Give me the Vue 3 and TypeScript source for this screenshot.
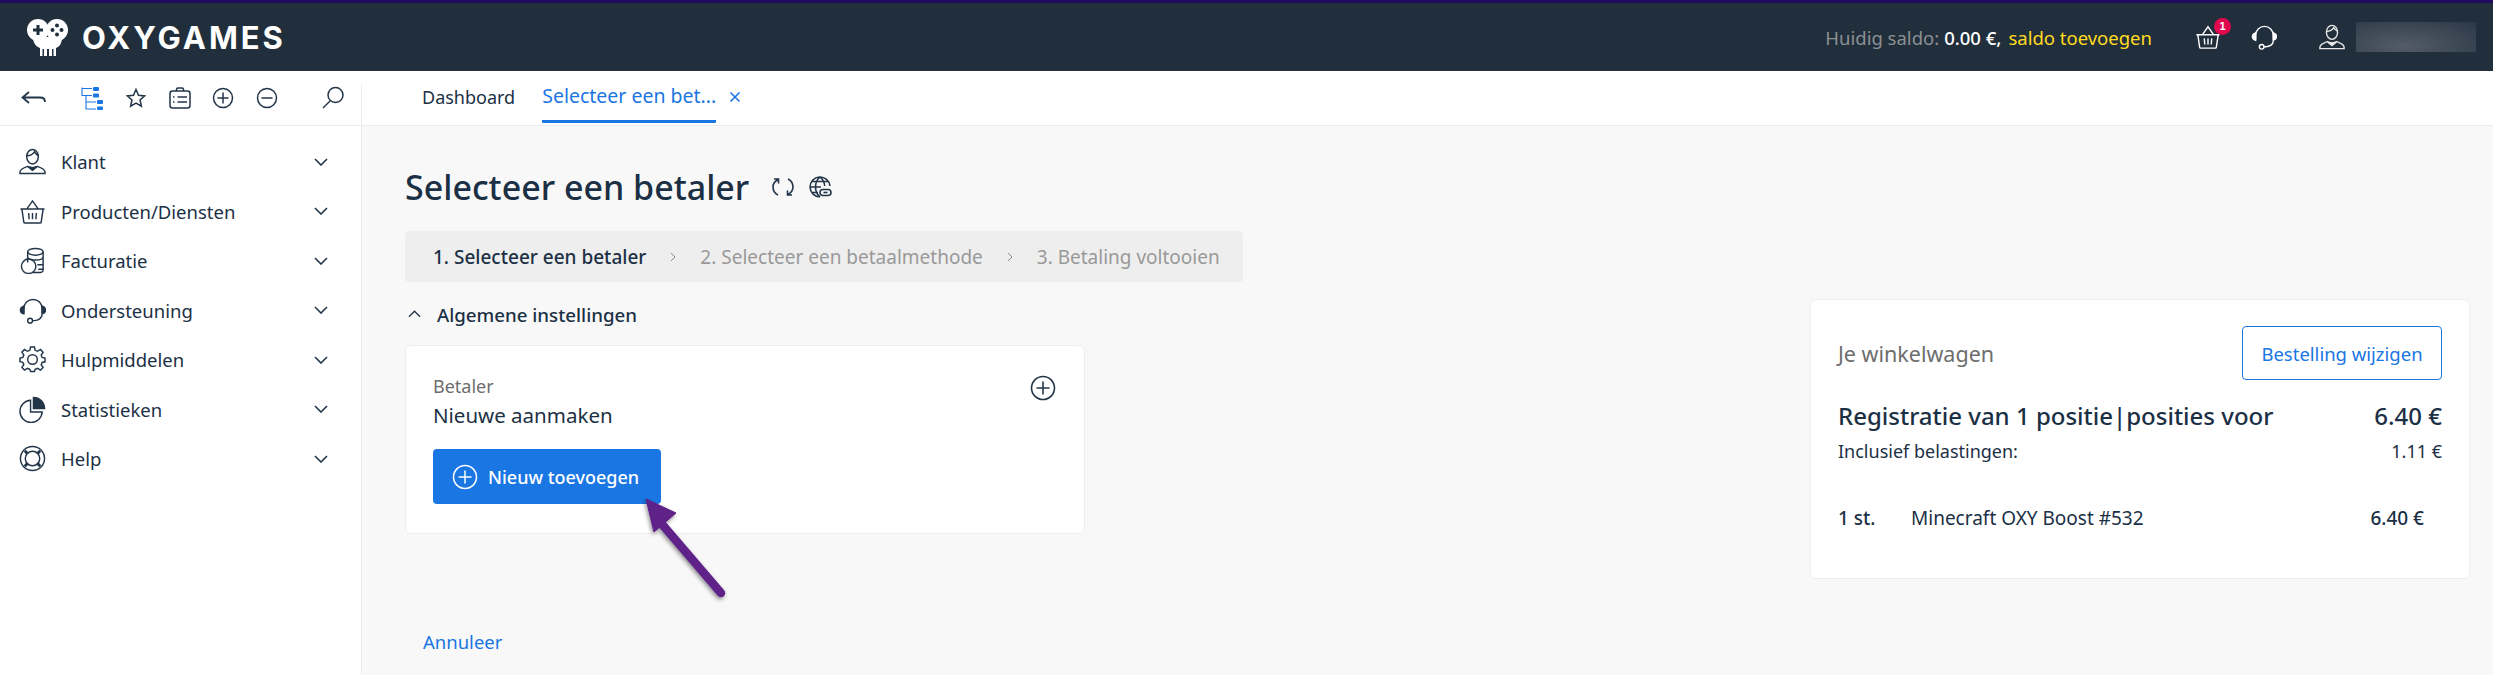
<template>
  <div class="page">
    <header class="topbar">
      <div class="logo">
        <svg class="logo-mark" viewBox="0 0 41 37">
          <circle cx="11" cy="11" r="11" fill="#fff" />
          <circle cx="30" cy="11" r="11" fill="#fff" />
          <path d="M6 18h29c0 7-3 10-6 11v8h-2.500v-7h-1.500v7h-3v-7h-2v7h-3v-7h-1.500v7H13v-8c-3-1-7-4-7-11z" fill="#fff" />
          <path d="M9.500 6h3v3.500H16v3h-3.500V16h-3v-3.500H6v-3h3.500z" fill="#212f3d" />
          <circle cx="30" cy="6.500" r="2" fill="#212f3d" />
          <circle cx="30" cy="15.500" r="2" fill="#212f3d" />
          <circle cx="25.500" cy="11" r="2" fill="#212f3d" />
          <circle cx="34.500" cy="11" r="2" fill="#212f3d" />
        </svg>
        <span class="logo-text">OXYGAMES</span>
      </div>
      <div class="top-right">
        <span class="balance">
          <span class="muted">Huidig saldo:</span>
          <b>0.00 €,</b>
          <span class="yellow">saldo toevoegen</span>
        </span>
        <span class="basket">
          <svg class="ico-top" viewBox="0 0 28 28" v-html="icons.basket"></svg>
          <i class="badge">1</i>
        </span>
        <svg class="ico-top headset" viewBox="0 0 28 28" v-html="icons.headset"></svg>
        <svg class="ico-top user" viewBox="0 0 28 28" v-html="icons.user"></svg>
        <div class="blurred"></div>
      </div>
    </header>

    <div class="toolbar">
      <div class="tools">
        <svg class="tool back" viewBox="0 0 26 16">
          <path d="M8 2 1.500 7.500 8 13M2 7.500h17c3 0 5 1.500 5 4.500" />
        </svg>
        <svg class="tool tree" viewBox="0 0 22 23">
          <path d="M1 0.500v8h10M1 1.500h10M5 8.500v13.500h10M5 15h10" />
          <rect x="12" y="0" width="6" height="4" rx="1" />
          <rect x="12" y="6.500" width="6" height="4" rx="1" />
          <rect x="16" y="13" width="6" height="4" rx="1" />
          <rect x="16" y="19.500" width="6" height="3.500" rx="1" />
        </svg>
        <svg class="tool star" viewBox="0 0 20 20">
          <path d="m10 1.500 2.500 5.800 6.200.6-4.700 4.100 1.400 6.200L10 15l-5.400 3.200L6 12 1.300 7.900l6.200-.6z" />
        </svg>
        <svg class="tool case" viewBox="0 0 24 24">
          <rect x="2" y="5" width="20" height="17" rx="2.500" />
          <path d="M8.500 5V3.500C8.500 2.500 9.500 2 10 2h4c.5 0 1.500.5 1.500 1.500V5M9.500 11H19M9.500 16H19M5 11h1.500M5 16h1.500" />
        </svg>
        <svg class="tool round plus" viewBox="0 0 22 22">
          <circle cx="11" cy="11" r="9.500" /><path d="M5.500 11h11M11 5.500v11" />
        </svg>
        <svg class="tool round" viewBox="0 0 22 22">
          <circle cx="11" cy="11" r="9.500" /><path d="M5.500 11h11" />
        </svg>
        <svg class="tool search" viewBox="0 0 24 24">
          <circle cx="14.500" cy="9" r="7.500" /><path d="M9 15 2 22" />
        </svg>
      </div>
      <nav class="tabs">
        <span class="tab">Dashboard</span>
        <span class="tab active">Selecteer een bet...</span>
        <svg class="tab-close" viewBox="0 0 12 12"><path d="m1.500 1.500 9 9M10.500 1.500l-9 9" /></svg>
      </nav>
    </div>

    <div class="body">
      <aside class="sidebar">
        <div class="menu-item" v-for="item in menu" :key="item.label">
          <svg class="menu-icon" viewBox="0 0 28 28" v-html="icons[item.icon]"></svg>
          <span class="menu-label">{{ item.label }}</span>
          <svg class="chev" viewBox="0 0 14 8"><path d="m1 1 6 6 6-6" /></svg>
        </div>
      </aside>

      <main class="main">
        <section class="left">
          <div class="title-row">
            <h1>Selecteer een betaler</h1>
            <svg class="head-ico" viewBox="0 0 24 24">
              <path d="M7 4.500C3.500 6.500 2 9.500 2 12c0 3.500 2 6.500 5 8M3 4h4.500v4.500M17 19.500c3.500-2 5-5 5-7.500 0-3.500-2-6.500-5-8M21 20h-4.500v-4.500" />
            </svg>
            <svg class="head-ico globe" viewBox="0 0 24 24">
              <path d="M22 11a10 10 0 1 0-10 11M2 12h11M3.500 6.500h17M3.500 17.500H10M12 2c-6 5-6 15 0 20M12 2c3 2.500 4.500 6 4.700 9" />
              <rect class="link" x="12" y="14.500" width="11" height="6" rx="3" />
              <path d="M15.500 17.500h4" />
            </svg>
          </div>

          <div class="steps">
            <template v-for="(step, i) in steps" :key="step">
              <svg v-if="i > 0" class="step-sep" viewBox="0 0 6 10"><path d="m1 1 4 4-4 4" /></svg>
              <span class="step" :class="{ current: i === 0 }">{{ step }}</span>
            </template>
          </div>

          <div class="section-head">
            <svg class="chev-up" viewBox="0 0 14 8"><path d="m1 7 6-6 6 6" /></svg>
            <span>Algemene instellingen</span>
          </div>

          <div class="card payer">
            <div class="payer-head">
              <div>
                <div class="payer-label">Betaler</div>
                <div class="payer-value">Nieuwe aanmaken</div>
              </div>
              <svg class="payer-plus" viewBox="0 0 26 26">
                <circle cx="13" cy="13" r="11.500" /><path d="M6.500 13h13M13 6.500v13" />
              </svg>
            </div>
            <button class="add-btn">
              <svg viewBox="0 0 26 26"><circle cx="13" cy="13" r="11.500" /><path d="M6.500 13h13M13 6.500v13" /></svg>
              Nieuw toevoegen
            </button>
          </div>

          <a class="cancel">Annuleer</a>
        </section>

        <aside class="card cart">
          <div class="cart-head">
            <span class="cart-title">Je winkelwagen</span>
            <button class="edit-btn">Bestelling wijzigen</button>
          </div>
          <div class="cart-total">
            <span>Registratie van 1 positie|posities voor</span>
            <span>6.40 €</span>
          </div>
          <div class="cart-tax">
            <span>Inclusief belastingen:</span>
            <span>1.11 €</span>
          </div>
          <div class="cart-line">
            <span class="qty">1 st.</span>
            <span class="name">Minecraft OXY Boost #532</span>
            <span class="price">6.40 €</span>
          </div>
        </aside>
      </main>
    </div>

    <!-- annotation arrow on top of the page -->
    <svg class="arrow" viewBox="0 0 100 120">
      <defs>
        <filter id="arrow-shadow" x="-20%" y="-20%" width="150%" height="150%">
          <feDropShadow dx="-1" dy="2" stdDeviation="2" flood-color="#000" flood-opacity="0.45" />
        </filter>
      </defs>
      <g filter="url(#arrow-shadow)">
        <path d="M19 28 79 98" stroke="#5e2089" stroke-width="8.500" stroke-linecap="round" />
        <path d="M4 4 34 18 12 37z" fill="#5e2089" stroke="#5e2089" stroke-linejoin="round" />
      </g>
    </svg>
  </div>
</template>

<script setup lang="ts">
const icons: Record<string, string> = {
  user: `<ellipse cx="14" cy="9" rx="6" ry="7.500"/><path d="M8 8c3 0 6-1 8-4 1 2 3 3 4 4"/><path d="M1 26.500V25c0-3 5-5 8-6l5 4 5-4c3 1 8 3 8 6v1.500z"/><path d="m10 19.500 4 3.500 4-3.500-4 1z" fill="currentColor"/>`,
  basket: `<path d="M1.500 11.500h25M3 11.500 5 25c.1.600.5 1 1 1h16c.5 0 .9-.4 1-1l2-13.500M8 11.500 14 3l6 8.500M10 15.500l.5 6.500M14 15.500V22M18 15.500l-.5 6.500"/>`,
  coins: `<ellipse cx="17" cy="5" rx="8" ry="3.500"/><path d="M9 5v11M25 5v19c0 1.500-2 2.500-5 2.500h-6M9 10c0 2 3.500 3.500 8 3.500s8-1.500 8-3.500M19 18.500h6M20 23h5"/><circle cx="10" cy="20" r="7.500"/>`,
  headset: `<path d="M5 17V12a9.500 9.500 0 0 1 19 0v5"/><path d="M5 9.500C3 10 1.500 12 1.500 13.500S3 17 5 17.500zM24 9.500c2 .5 3.500 2.500 3.500 4s-1.500 3.500-3.500 4z" fill="currentColor"/><path d="M24 18c0 4-4 6.500-8 6.500h-2"/><circle cx="11.500" cy="24.500" r="2.500"/>`,
  gear: `<circle cx="14" cy="14" r="5"/><path d="m12 2-.8 3.500-2.400 1L5.700 4.600 3 7.400 5 10.400l-1 2.400-3 .7v3.800l3 .7 1 2.400L3 23.200 5.700 26l3.100-1.900 2.400 1 .8 2.400h4l.8-2.400 2.400-1 3.100 1.900L25 23.200l-2-2.700 1-2.400 3-.7v-3.800l-3-.7-1-2.400 2-3L22.300 4.600l-3.100 1.900-2.400-1L16 2z" transform="translate(0 -1)"/>`,
  pie: `<path d="M12 4.500a11.500 11.500 0 1 0 12 12H12z"/><path d="M15 1.500v11.500h11.500C26.500 6.500 21.500 1.500 15 1.500z" fill="currentColor"/>`,
  help: `<circle cx="14" cy="14" r="12.500"/><circle cx="14" cy="14" r="7.500"/><path d="m6 6 3 3M22 6l-3 3M6 22l3-3M22 22l-3-3" stroke-width="3"/>`,
}

const menu = [
  { label: 'Klant', icon: 'user' },
  { label: 'Producten/Diensten', icon: 'basket' },
  { label: 'Facturatie', icon: 'coins' },
  { label: 'Ondersteuning', icon: 'headset' },
  { label: 'Hulpmiddelen', icon: 'gear' },
  { label: 'Statistieken', icon: 'pie' },
  { label: 'Help', icon: 'help' },
]

const steps = ['1. Selecteer een betaler', '2. Selecteer een betaalmethode', '3. Betaling voltooien']
</script>

<style>
body {
  margin: 0;
  background: #f8f8f8;
}
</style>

<style scoped>
.page {
  position: relative;
  width: 2493px;
  height: 675px;
  overflow: hidden;
  font-family: "Noto Sans", "Open Sans", sans-serif;
  font-size: 18.5px;
  color: #1c3045;
}
svg {
  flex: none;
}

/* header */
.topbar {
  height: 68px;
  border-top: 3px solid #1e0a5e;
  background: #212f3d;
  display: flex;
  align-items: center;
  justify-content: space-between;
  padding: 0 17px 0 27px;
}
.logo {
  display: flex;
  align-items: center;
  gap: 14px;
}
.logo-mark {
  width: 41px;
  height: 37px;
}
.logo-text {
  font-family: Inter, sans-serif;
  font-weight: 700;
  font-size: 31px;
  letter-spacing: 3px;
  color: #fff;
}
.top-right {
  display: flex;
  align-items: center;
}
.balance {
  display: flex;
  gap: 5px;
  font-size: 18.5px;
  margin-right: 43px;
}
.muted {
  color: #8d8f92;
}
.balance b {
  color: #fff;
  font-weight: 500;
}
.yellow {
  color: #ffdb1e;
  margin-left: 2px;
}
.ico-top {
  width: 26px;
  height: 26px;
  fill: none;
  stroke: #fff;
  color: #fff;
  stroke-width: 1.5;
  display: block;
}
.basket {
  position: relative;
  display: block;
}
.badge {
  position: absolute;
  top: -6px;
  right: -10px;
  width: 17px;
  height: 17px;
  border-radius: 50%;
  background: #e0094d;
  color: #fff;
  font: 700 11px/17px "Liberation Sans", sans-serif;
  text-align: center;
}
.headset {
  margin-left: 30px;
}
.user {
  margin-left: 42px;
  stroke: #e6e6e6;
}
.blurred {
  width: 120px;
  height: 30px;
  margin-left: 11px;
  background: radial-gradient(ellipse at 40% 80%, #535c68 0%, #3f4a57 50%, #2b3846 100%);
}

/* toolbar */
.toolbar {
  height: 54px;
  background: #fff;
  border-bottom: 1px solid #ececec;
  display: flex;
}
.tools {
  width: 362px;
  box-sizing: border-box;
  display: flex;
  align-items: center;
  padding-left: 21px;
  position: relative;
}
.tools::after {
  content: "";
  position: absolute;
  right: 0;
  top: 13px;
  bottom: 0;
  width: 1px;
  background: #ececec;
}
.tool {
  fill: none;
  stroke: #233549;
  stroke-width: 1.5;
}
.back {
  width: 26px;
  height: 16px;
  stroke-width: 1.8;
}
.tree {
  width: 22px;
  height: 23px;
  margin-left: 34px;
  stroke: #1a76e3;
  stroke-width: 1.1;
}
.tree rect {
  fill: #1a76e3;
  stroke: none;
}
.star {
  width: 20px;
  height: 20px;
  margin-left: 23px;
}
.case {
  width: 24px;
  height: 24px;
  margin-left: 22px;
}
.round {
  width: 22px;
  height: 22px;
  margin-left: 22px;
}
.round.plus {
  margin-left: 20px;
}
.search {
  width: 24px;
  height: 24px;
  margin-left: 43px;
}
.tabs {
  display: flex;
  align-items: stretch;
  padding-left: 60px;
}
.tab {
  display: flex;
  align-items: center;
  height: 52px;
  margin-right: 27px;
  white-space: nowrap;
  font-size: 18px;
}
.tab.active {
  color: #1a76e3;
  border-bottom: 3px solid #1a76e3;
  height: 49px;
  margin-right: 13px;
  border-radius: 0 0 1px 1px;
  font-size: 19.500px;
}
.tab-close {
  width: 12px;
  height: 12px;
  align-self: center;
  fill: none;
  stroke: #1a76e3;
  stroke-width: 1.6;
  margin-bottom: 2px;
}

/* sidebar */
.body {
  display: flex;
  height: 549px;
}
.sidebar {
  width: 362px;
  box-sizing: border-box;
  background: #fff;
  border-right: 1px solid #ececec;
  padding: 11px 33px 0 19px;
}
.menu-item {
  height: 49.500px;
  display: flex;
  align-items: center;
  font-size: 18.5px;
}
.menu-icon {
  width: 27px;
  height: 27px;
  fill: none;
  stroke: #233549;
  color: #233549;
  stroke-width: 1.5;
}
.menu-label {
  margin-left: 15px;
  flex: 1;
}
.chev {
  width: 14px;
  height: 8px;
  fill: none;
  stroke: #233549;
  stroke-width: 1.6;
}

/* main column */
.main {
  flex: 1;
  display: flex;
  justify-content: space-between;
  padding: 0 23px 0 43px;
}
.left {
  width: 838px;
}
.title-row {
  display: flex;
  align-items: center;
  height: 48px;
  margin-top: 37px;
}
h1 {
  margin: 0 22px 0 0;
  font-size: 34px;
  font-weight: 500;
  color: #1c3045;
}
.head-ico {
  width: 24px;
  height: 24px;
  fill: none;
  stroke: #233549;
  stroke-width: 1.6;
  margin-right: 13px;
}
.link {
  fill: #f8f8f8;
  stroke-width: 1.6;
}
.steps {
  margin-top: 20px;
  height: 51px;
  background: #eee;
  border-radius: 4px;
  display: flex;
  align-items: center;
  padding-left: 28px;
  font-size: 19px;
}
.step {
  color: #999;
  white-space: nowrap;
}
.step.current {
  color: #1c3045;
  font-weight: 500;
}
.step-sep {
  width: 6px;
  height: 10px;
  margin: 0 24px;
  fill: none;
  stroke: #8a8a8a;
  stroke-width: 1;
}
.section-head {
  margin-top: 15px;
  height: 34px;
  display: flex;
  align-items: center;
  gap: 16px;
  padding-left: 3px;
  font-weight: 500;
  font-size: 18.700px;
}
.chev-up {
  width: 13px;
  height: 8px;
  fill: none;
  stroke: #233549;
  stroke-width: 1.4;
}
.card {
  background: #fff;
  border: 1px solid #eee;
  border-radius: 6px;
  box-sizing: border-box;
}
.payer {
  margin-top: 14px;
  width: 680px;
  height: 189px;
  padding: 27px 28px 0 27px;
}
.payer-head {
  display: flex;
  justify-content: space-between;
}
.payer-label {
  font-size: 18px;
  line-height: 26px;
  color: #6d6d6d;
}
.payer-value {
  font-size: 20.500px;
  line-height: 32px;
  color: #1c3045;
}
.payer-plus {
  width: 26px;
  height: 26px;
  margin-top: 2px;
  fill: none;
  stroke: #233549;
  stroke-width: 1.6;
}
.add-btn {
  margin-top: 18px;
  width: 228px;
  height: 55px;
  border: 0;
  border-radius: 4px;
  background: #1a76e3;
  color: #fff;
  display: flex;
  align-items: center;
  gap: 10px;
  padding: 0 0 0 19px;
  font: 500 18px "Noto Sans", sans-serif;
}
.add-btn svg {
  width: 26px;
  height: 26px;
  fill: none;
  stroke: #fff;
  stroke-width: 1.5;
}
.cancel {
  display: block;
  margin: 95px 0 0 18px;
  color: #1a76e3;
  font-size: 18.500px;
}

/* cart */
.cart {
  margin-top: 173px;
  width: 660px;
  height: 280px;
  padding: 26px 27px 0 27px;
}
.cart-head {
  display: flex;
  align-items: center;
  justify-content: space-between;
}
.cart-title {
  font-size: 21.500px;
  color: #6d6d6d;
}
.edit-btn {
  width: 200px;
  height: 54px;
  background: #fff;
  border: 1px solid #1a76e3;
  border-radius: 4px;
  color: #1a76e3;
  font: 18.500px "Noto Sans", sans-serif;
}
.cart-total,
.cart-tax {
  display: flex;
  justify-content: space-between;
}
.cart-total {
  margin-top: 20px;
  font-size: 24px;
  line-height: 32px;
  font-weight: 500;
}
.cart-tax {
  margin-top: 4px;
  line-height: 30px;
  font-size: 18px;
}
.cart-line {
  margin-top: 37px;
  display: flex;
  align-items: center;
  line-height: 30px;
  font-size: 19px;
}
.qty {
  width: 73px;
  font-weight: 500;
}
.name {
  flex: 1;
}
.price {
  margin-right: 18px;
  font-weight: 500;
}

.arrow {
  position: absolute;
  left: 642px;
  top: 495px;
  width: 100px;
  height: 120px;
}
</style>
